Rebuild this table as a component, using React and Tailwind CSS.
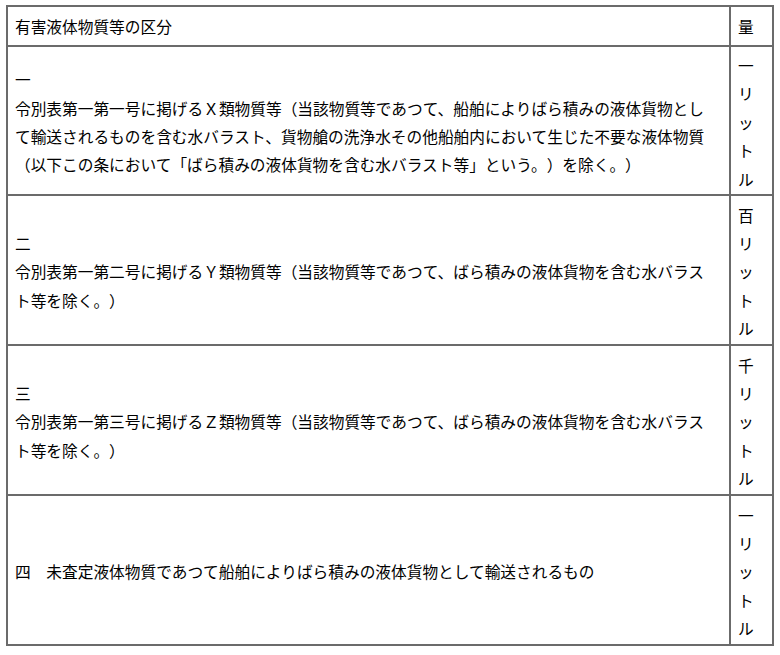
const rows = [
  {
    label: "一",
    lines: [
      "令別表第一第一号に掲げるＸ類物質等（当該物質等であつて、船舶によりばら積みの液体貨物とし",
      "て輸送されるものを含む水バラスト、貨物艙の洗浄水その他船舶内において生じた不要な液体物質",
      "（以下この条において「ばら積みの液体貨物を含む水バラスト等」という。）を除く。）",
    ],
    amount: "一リットル",
    h: "h-[149px]",
  },
  {
    label: "二",
    lines: [
      "令別表第一第二号に掲げるＹ類物質等（当該物質等であつて、ばら積みの液体貨物を含む水バラス",
      "ト等を除く。）",
    ],
    amount: "百リットル",
    h: "h-[150px]",
  },
  {
    label: "三",
    lines: [
      "令別表第一第三号に掲げるＺ類物質等（当該物質等であつて、ばら積みの液体貨物を含む水バラス",
      "ト等を除く。）",
    ],
    amount: "千リットル",
    h: "h-[150px]",
  },
  {
    inline: "四　未査定液体物質であつて船舶によりばら積みの液体貨物として輸送されるもの",
    amount: "一リットル",
    h: "h-[150px]",
  },
];

function AmountCell({ text, h }) {
  return (
    <td className={`${h} border border-[#6b6b6b] pl-[7px] pr-[6px] pt-[5px] pb-0 align-middle`}>
      {[...text].map((c, i) => (
        <div key={i} className="whitespace-nowrap">
          {c}
        </div>
      ))}
    </td>
  );
}

export default function App() {
  return (
    <div
      lang="ja"
      className="min-h-screen bg-white pl-[6px] pt-[5px] text-[15.7px] leading-[28.4px] text-black [text-spacing-trim:space-all]"
      style={{ fontFamily: '"Noto Sans CJK JP", "Noto Sans", sans-serif' }}
    >
      <table className="w-[768px] table-fixed border-separate border-spacing-0 border border-[#6b6b6b]">
        <colgroup>
          <col className="w-[723px]" />
          <col className="w-[43px]" />
        </colgroup>
        <thead>
          <tr>
            <th className="h-[40px] border border-[#6b6b6b] pl-[7px] pr-[6px] pt-[2px] text-left align-middle font-normal">
              有害液体物質等の区分
            </th>
            <th className="h-[40px] border border-[#6b6b6b] pl-[7px] pr-[6px] pt-[2px] text-left align-middle font-normal">
              量
            </th>
          </tr>
        </thead>
        <tbody>
          {rows.map((row, i) => (
            <tr key={i}>
              <td className={`${row.h} border border-[#6b6b6b] pl-[7px] pr-[6px] pt-[5px] pb-0 align-middle`}>
                {row.inline ? (
                  <div className="whitespace-nowrap">{row.inline}</div>
                ) : (
                  <>
                    <div>{row.label}</div>
                    {row.lines.map((line, j) => (
                      <div key={j} className="whitespace-nowrap">
                        {line}
                      </div>
                    ))}
                  </>
                )}
              </td>
              <AmountCell text={row.amount} h={row.h} />
            </tr>
          ))}
        </tbody>
      </table>
    </div>
  );
}
